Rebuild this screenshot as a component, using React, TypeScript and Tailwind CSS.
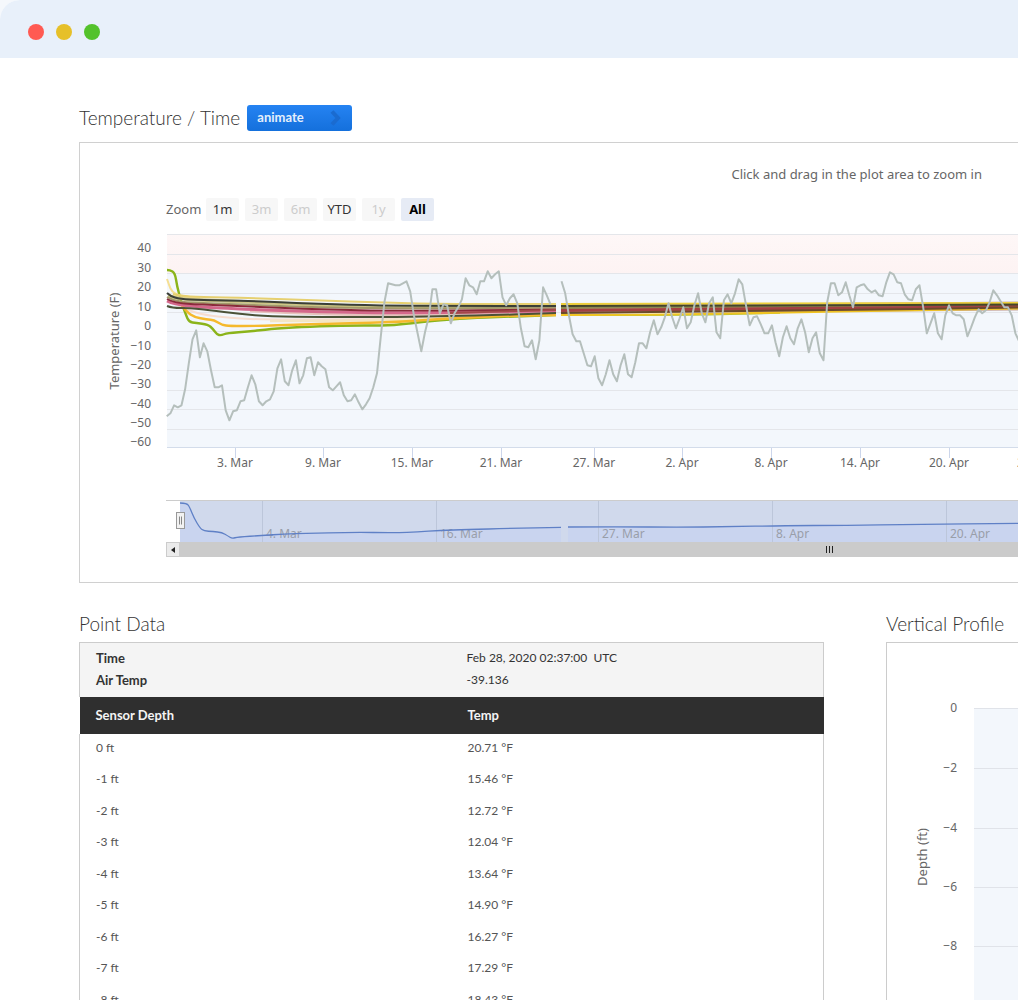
import React from "react";

type Point = [number, number];

/* Air temperature, one sample every six hours, as heights in the plot. */
const AIR_STEP = 3.69;
const airBeforeGap = [
  416, 413, 405, 407, 405, 389, 363, 339, 330, 357, 343, 351, 370, 387, 387, 385, 410, 420, 411, 410, 401, 400, 387,
  375, 384, 401, 405, 401, 399, 391, 368, 359, 381, 385, 370, 360, 383, 375, 358, 357, 375, 362, 366, 369, 387, 390,
  386, 382, 395, 401, 400, 394, 402, 409, 404, 398, 387, 373, 337, 302, 283, 284, 285, 285, 283, 281, 291, 315, 333,
  351, 332, 317, 289, 289, 313, 304, 305, 323, 313, 307, 299, 278, 285, 287, 294, 281, 281, 271, 278, 274, 271, 297,
  305, 298, 294, 303, 328, 346, 347, 340, 359, 340, 287, 295, 304,
];
const airAfterGap = [
  281, 293, 315, 334, 341, 341, 353, 365, 366, 356, 378, 385, 374, 360, 374, 381, 365, 354, 374, 377, 362, 343, 343,
  348, 332, 320, 334, 327, 317, 303, 317, 328, 318, 307, 328, 322, 305, 293, 313, 322, 303, 297, 332, 338, 300, 294,
  303, 293, 279, 284, 305, 325, 317, 316, 324, 333, 333, 325, 342, 356, 337, 326, 338, 344, 328, 319, 332, 352, 338,
  332, 353, 360, 302, 283, 283, 295, 292, 282, 295, 307, 287, 285, 284, 289, 292, 290, 295, 296, 282, 272, 274, 282,
  283, 294, 299, 300, 289, 285, 307, 333, 323, 313, 333, 339, 315, 305, 313, 315, 315, 319, 336, 327, 317, 309, 313,
  310, 302, 290, 295, 301, 307, 307, 315, 333, 341,
];

const airPoints = (values: number[], first: number) =>
  values.map((y, i) => `${(166.7 + (first + i) * AIR_STEP).toFixed(1)},${y + 0.3}`).join(" ");

/* Path that passes smoothly through the middle of each pair of points. */
const smooth = (pts: Point[]) => {
  let d = `M${pts[0][0]} ${pts[0][1]}`;
  for (let i = 1; i < pts.length - 1; i++) {
    const mx = (pts[i][0] + pts[i + 1][0]) / 2;
    const my = (pts[i][1] + pts[i + 1][1]) / 2;
    d += ` Q${pts[i][0]} ${pts[i][1]} ${mx} ${my}`;
  }
  const last = pts[pts.length - 1];
  return `${d} L${last[0]} ${last[1]}`;
};

type Series = { color: string; width: number; points: Point[] };

const sensors: Series[] = [
  { color: "#f6ddd0", width: 2, points: [[178, 305], [190, 311], [205, 315], [230, 318], [260, 319.5], [320, 319.5], [400, 319], [460, 317], [556, 314]] },
  { color: "#f3e6c4", width: 2.5, points: [[270, 321], [320, 321], [400, 320], [460, 317], [556, 314]] },
  { color: "#e6c3bd", width: 2.5, points: [[250, 311], [320, 314.5], [400, 315], [460, 314], [556, 312]] },
  { color: "#8bb41a", width: 2.4, points: [[167, 270], [170, 270], [175, 273], [177, 286], [181, 301], [186, 315], [189, 322], [196, 323], [208, 324.5], [213, 329], [217, 334.5], [221, 335.5], [227, 333], [250, 331.5], [270, 329], [300, 327], [340, 325.5], [388, 325.5], [405, 324], [430, 321], [470, 318], [500, 317], [556, 315]] },
  { color: "#f5b92c", width: 2.4, points: [[182, 306], [187, 312], [194, 317], [207, 319.5], [214, 320], [222, 325], [230, 326], [255, 326], [300, 324.5], [340, 323.5], [400, 322], [430, 319.5], [460, 318], [500, 316], [556, 315]] },
  { color: "#f6df92", width: 2, points: [[167, 279], [169, 285], [172, 292], [180, 296], [200, 298]] },
  { color: "#cdc685", width: 3.4, points: [[168, 296], [180, 299], [200, 300], [250, 302], [320, 305], [400, 308], [556, 307]] },
  { color: "#e6d070", width: 2, points: [[173, 294], [180, 296], [200, 297], [250, 298], [320, 300.5], [380, 302.5], [440, 304], [556, 304]] },
  { color: "#a2996a", width: 2, points: [[167, 297], [174, 301], [190, 302.5], [240, 304.5], [320, 307.5], [420, 308.5], [556, 307.5]] },
  { color: "#d4688b", width: 3, points: [[167, 301], [174, 304.5], [200, 307], [240, 309], [320, 312], [400, 313], [556, 311]] },
  { color: "#8a2b3a", width: 2, points: [[167, 299], [174, 303], [200, 304.5], [250, 306.5], [320, 309.5], [400, 311], [556, 309.5]] },
  { color: "#3b3f37", width: 2, points: [[167, 293], [170, 296], [180, 299], [200, 300], [250, 301], [320, 304], [380, 305.5], [450, 306], [556, 306]] },
  { color: "#4b5238", width: 2, points: [[167, 306], [172, 308], [190, 308], [208, 310], [240, 314], [270, 316.5], [320, 317], [400, 317], [450, 316], [500, 315], [556, 313]] },
  { color: "#a04a48", width: 2, points: [[450, 313], [500, 311.5], [556, 310]] },

  { color: "#c9a9a0", width: 9, points: [[561, 309], [780, 308], [1018, 306]] },
  { color: "#a8c640", width: 1.5, points: [[561, 315], [680, 315.5], [780, 313]] },
  { color: "#f0c322", width: 2.2, points: [[561, 315], [680, 314.5], [780, 312.5], [900, 310.5], [1018, 308.5]] },
  { color: "#edcf3c", width: 2, points: [[561, 304], [780, 303.5], [1018, 303]] },
  { color: "#8f8a4e", width: 2, points: [[561, 308], [780, 307], [1018, 305]] },
  { color: "#a34042", width: 3, points: [[561, 310.5], [780, 309], [1018, 306.5]] },
  { color: "#6b4a2c", width: 2, points: [[561, 313], [780, 311], [1018, 307.5]] },
  { color: "#44462c", width: 2, points: [[561, 306], [780, 305.5], [1018, 304.5]] },
];

const gridLines = [234, 254, 273, 293, 312, 331, 351, 370, 390, 409, 429, 447];
const tempLabels = ["40", "30", "20", "10", "0", "−10", "−20", "−30", "−40", "−50", "−60"];
const tempLabelY = [247, 267, 286, 306, 325, 345, 364, 383, 403, 422, 441];
const dateLabels: [string, number][] = [
  ["3. Mar", 235], ["9. Mar", 323], ["15. Mar", 412], ["21. Mar", 501], ["27. Mar", 594],
  ["2. Apr", 682], ["8. Apr", 771], ["14. Apr", 860], ["20. Apr", 949], ["26. Apr", 1037],
];
const navLabels: [string, number][] = [
  ["4. Mar", 262], ["16. Mar", 436], ["27. Mar", 598], ["8. Apr", 772], ["20. Apr", 946],
];
const navBefore: Point[] = [
  [180, 503], [187, 503], [190, 508], [194, 518], [200, 528], [204, 531], [213, 531.5], [222, 532.5], [228, 536],
  [232, 538.5], [238, 537], [262, 535.5], [284, 534], [307, 533.3], [350, 532.3], [397, 532.7], [417, 532],
  [440, 530.3], [467, 529.7], [510, 528.3], [561, 527.3],
];
const navAfter: Point[] = [[568, 527], [620, 526.7], [677, 527.3], [730, 526.7], [780, 525.7], [847, 525.3], [913, 524.3], [1018, 523.3]];

const rows: [string, string][] = [
  ["0 ft", "20.71 °F"], ["-1 ft", "15.46 °F"], ["-2 ft", "12.72 °F"], ["-3 ft", "12.04 °F"], ["-4 ft", "13.64 °F"],
  ["-5 ft", "14.90 °F"], ["-6 ft", "16.27 °F"], ["-7 ft", "17.29 °F"], ["-8 ft", "18.43 °F"], ["-9 ft", "19.21 °F"],
];

const zoomRanges = [
  { label: "1m", state: "on" },
  { label: "3m", state: "off" },
  { label: "6m", state: "off" },
  { label: "YTD", state: "on" },
  { label: "1y", state: "off" },
  { label: "All", state: "active" },
];

const zoomStyle: Record<string, string> = {
  on: "bg-[#f7f7f7] text-[#333]",
  off: "bg-[#f7f7f7] text-[#ccc]",
  active: "bg-[#e6ebf5] font-bold text-black",
};

function TemperatureChart() {
  return (
    <svg className="block h-[253px] w-full font-['Noto_Sans',sans-serif] text-[12px]" role="img" aria-label="Temperature over time">
      <defs>
        <linearGradient id="warm" x1="0" y1="0" x2="0" y2="1">
          <stop offset="0" stopColor="#fef7f7" />
          <stop offset="1" stopColor="#fdf3f3" />
        </linearGradient>
      </defs>
      <g transform="translate(-80 -221)">
        <rect x="167" y="234" width="100%" height="40" fill="url(#warm)" />
        <rect x="167" y="274" width="100%" height="174" fill="#f3f7fc" />
        {gridLines.map((y) => (
          <rect key={y} x="167" y={y} width="100%" height="1" fill={y > 440 ? "#d3dcea" : "#e4e6ea"} />
        ))}
        {dateLabels.map(([label, x]) => (
          <g key={label}>
            <line x1={x + 0.5} x2={x + 0.5} y1="448" y2="458" stroke="#ccd6eb" />
            <text x={x} y="467" textAnchor="middle" fill="#666">{label}</text>
          </g>
        ))}
        {tempLabels.map((label, i) => (
          <text key={label} x="151" y={tempLabelY[i] + 5} textAnchor="end" fill="#666">{label}</text>
        ))}
        <text transform="translate(119 341) rotate(-90)" textAnchor="middle" fill="#666" fontSize="13">Temperature (F)</text>
        <g fill="none" strokeLinejoin="round">
          {sensors.map((s, i) => (
            <path key={i} d={smooth(s.points)} stroke={s.color} strokeWidth={s.width} />
          ))}
          <polyline points={airPoints(airBeforeGap, 0)} stroke="#b5bfbc" strokeWidth="2" />
          <polyline points={airPoints(airAfterGap, 107)} stroke="#b5bfbc" strokeWidth="2" />
        </g>
      </g>
    </svg>
  );
}

function Navigator() {
  return (
    <svg className="block h-[52px] w-full font-['Noto_Sans',sans-serif] text-[12px]" role="img" aria-label="Range navigator">
      <g transform="translate(-80 -490)">
        <rect x="180" y="500" width="100%" height="42" fill="#d0d9ec" />
        <path d={`${smooth(navBefore)} L561 542 L180 542 Z`} fill="#c9d4ef" />
        <path d={`${smooth(navAfter)} L1018 542 L568 542 Z`} fill="#c9d4ef" />
        {navLabels.map(([label, x]) => (
          <g key={label}>
            <line x1={x + 0.5} x2={x + 0.5} y1="501" y2="542" stroke="#bcc6da" />
            <text x={x + 4} y="538" fill="#999ea9">{label}</text>
          </g>
        ))}
        <path d={smooth(navBefore)} fill="none" stroke="#5f80c6" strokeWidth="1.3" />
        <path d={smooth(navAfter)} fill="none" stroke="#5f80c6" strokeWidth="1.3" />
        <rect x="166" y="500" width="100%" height="1" fill="#ccc" />
        <rect x="176.5" y="512.5" width="8" height="16" fill="#f2f2f2" stroke="#999" />
        <path d="M179.5 516.5v8M181.5 516.5v8" stroke="#888" />
      </g>
    </svg>
  );
}

function DepthChart() {
  const ticks: [string, number][] = [["0", 708], ["−2", 768], ["−4", 828], ["−6", 887], ["−8", 946]];
  return (
    <svg className="block h-[420px] w-full font-['Noto_Sans',sans-serif] text-[12px]" role="img" aria-label="Depth profile">
      <g transform="translate(-887 -643)">
        <rect x="974" y="708" width="100%" height="355" fill="#f3f7fc" />
        {ticks.map(([label, y]) => (
          <g key={label}>
            <rect x="974" y={y} width="100%" height="1" fill="#e0e3e9" />
            <text x="957" y={y + 4} textAnchor="end" fill="#666">{label}</text>
          </g>
        ))}
        <text transform="translate(927 857) rotate(-90)" textAnchor="middle" fill="#666" fontSize="13">Depth (ft)</text>
      </g>
    </svg>
  );
}

function Heading({ children }: { children: React.ReactNode }) {
  return <h2 className="text-[19px] leading-[26px] font-light whitespace-nowrap text-[#333]">{children}</h2>;
}

export default function App() {
  return (
    <div className="h-screen overflow-hidden bg-[#f5f8fc] font-['Lato',sans-serif]">
      <div className="min-h-full overflow-hidden rounded-l-[20px] bg-white">
        <header className="flex h-[58px] items-center gap-3 bg-[#e8f0fa] px-7 pt-1.5">
          <span className="size-4 rounded-full bg-[#ff5a52]" />
          <span className="size-4 rounded-full bg-[#e6c029]" />
          <span className="size-4 rounded-full bg-[#53c22b]" />
        </header>

        <main className="pt-[47px] pl-[79px]">
          <section>
            <div className="mb-[11px] flex items-center gap-[7px]">
              <Heading>Temperature / Time</Heading>
              <button
                type="button"
                className="flex h-[26px] w-[105px] items-center justify-between rounded-[3px] bg-linear-to-b from-[#2583f2] to-[#1470dc] pr-2 pl-[10px] text-[13px] font-bold text-[#e4effc]"
              >
                animate
                <svg className="size-4" viewBox="0 0 16 16" fill="none" stroke="#1a6bd0" strokeWidth="4" aria-hidden="true">
                  <path d="M4 1.5 L10 8 L4 14.5" />
                </svg>
              </button>
            </div>

            <div className="border border-r-0 border-[#d0d0d0] pt-[23px] pb-[25px]">
              <p className="pr-9 text-right font-['Noto_Sans',sans-serif] text-[13px] leading-4 text-[#666]">
                Click and drag in the plot area to zoom in
              </p>
              <div className="mt-4 flex items-center gap-[6px] pl-[86px] font-['Noto_Sans',sans-serif] text-[13px] text-[#666]">
                <span className="w-[34px]">Zoom</span>
                {zoomRanges.map(({ label, state }) => (
                  <button key={label} type="button" disabled={state === "off"} className={`h-[23px] w-[33px] rounded-[2px] ${zoomStyle[state]}`}>
                    {label}
                  </button>
                ))}
              </div>
              <TemperatureChart />
              <div className="mt-4">
                <Navigator />
                <div className="ml-[86px] flex h-[15px] bg-[#cbcbcb]">
                  <button type="button" aria-label="Scroll left" className="flex w-[14px] items-center justify-center border border-[#ccc] bg-[#ebebeb]">
                    <svg className="h-1.5 w-1" viewBox="0 0 4 6" aria-hidden="true">
                      <path d="M4 0v6L0 3z" fill="#222" />
                    </svg>
                  </button>
                  <span className="flex h-full items-center gap-[2px] pl-[646px]">
                    <i className="h-[7px] w-px bg-[#222]" />
                    <i className="h-[7px] w-px bg-[#222]" />
                    <i className="h-[7px] w-px bg-[#222]" />
                  </span>
                </div>
              </div>
            </div>
          </section>

          <div className="mt-7 grid grid-cols-[minmax(0,745px)_minmax(132px,1fr)] gap-x-[62px]">
            <section>
              <Heading>Point Data</Heading>
              <div className="mt-[5px] text-[13px]">
                <dl className="grid grid-cols-2 gap-y-1 border border-b-0 border-[#ccc] bg-[#f4f4f4] pt-[6px] pb-2 leading-[18px] text-[#333]">
                  <dt className="px-4 font-bold">Time</dt>
                  <dd className="px-[15px] text-[12px] whitespace-pre">Feb 28, 2020 02:37:00&nbsp; UTC</dd>
                  <dt className="px-4 font-bold">Air Temp</dt>
                  <dd className="px-[15px] text-[12px]">-39.136</dd>
                </dl>
                <table className="w-full table-fixed text-left">
                  <thead className="bg-[#2f2f2f] text-[#f4f4f4]">
                    <tr className="h-[37px]">
                      <th className="px-4 font-bold">Sensor Depth</th>
                      <th className="px-4 font-bold">Temp</th>
                    </tr>
                  </thead>
                  <tbody className="text-[12px] leading-[18px] text-[#555]">
                    {rows.map(([depth, temp]) => (
                      <tr key={depth} className="odd:h-[31px] even:h-8">
                        <td className="border-l border-[#ccc] px-4 pb-1">{depth}</td>
                        <td className="border-r border-[#ccc] px-4 pb-1">{temp}</td>
                      </tr>
                    ))}
                  </tbody>
                </table>
              </div>
            </section>
            <section>
              <Heading>Vertical Profile</Heading>
              <div className="mt-[5px] border border-r-0 border-[#ccc]">
                <DepthChart />
              </div>
            </section>
          </div>
        </main>
      </div>
    </div>
  );
}
